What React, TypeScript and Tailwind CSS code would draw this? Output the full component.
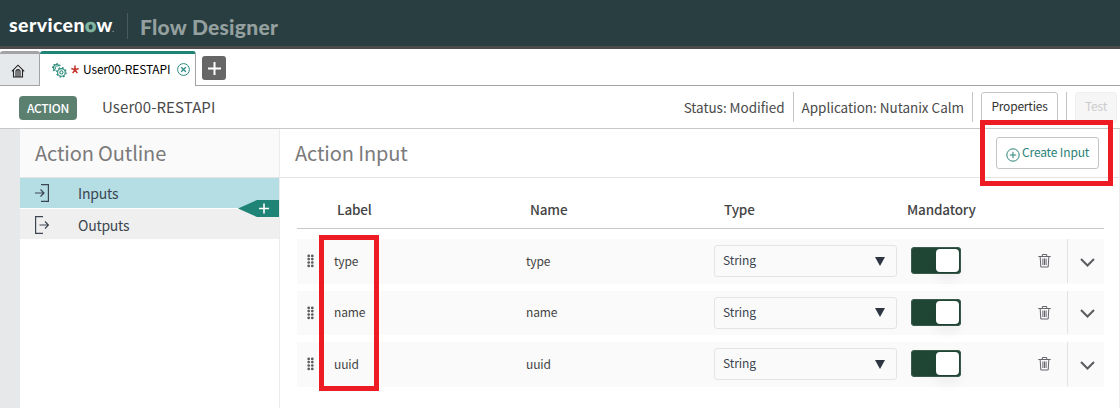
import React from "react";

const RED = "absolute border-[5px] border-[#ed1c24] pointer-events-none";

function House() {
  return (
    <svg width="14" height="14" viewBox="0 0 14 14" fill="none" stroke="#222" strokeWidth="1.1">
      <path d="M.8 7.400 7 1.200l6.200 6.200" />
      <path d="M2.500 6v7h9V6" />
      <path d="M5 13V7.500a2 2 0 0 1 4 0V13M7 6v7" />
    </svg>
  );
}

function Gear({ cx, cy, r, dash }: { cx: number; cy: number; r: number; dash: string }) {
  return (
    <g>
      <circle cx={cx} cy={cy} r={r} strokeWidth="1.1" />
      <circle cx={cx} cy={cy} r={r + 0.9} strokeWidth="1.3" strokeDasharray={dash} />
      <circle cx={cx} cy={cy} r={r * 0.42} strokeWidth="1.1" />
    </g>
  );
}

function Gears() {
  return (
    <svg width="15" height="15" viewBox="0 0 15 15" fill="none" stroke="#2f8d7c">
      <path d="M7.300 3.200A3.100 3.100 0 1 0 3.500 7.600" strokeWidth="1.200" />
      <path d="M8.200 2.900A4 4 0 1 0 3.200 8.500" strokeWidth="1.300" strokeDasharray="1.500 1.500" />
      <path d="M5.600 3.800A1.400 1.400 0 1 0 4 6" strokeWidth="1" />
      <Gear cx={9.400} cy={9.400} r={3.800} dash="1.840 1.850" />
    </svg>
  );
}

function Trash() {
  return (
    <svg width="13" height="15" viewBox="0 0 13 15" fill="none" stroke="#66646c" strokeWidth="1">
      <path d="M.3 3.500h12.400M4.300 3.200V1.500h4.400v1.700M2.200 4l.6 10h7.400l.6-10M4.900 5.500V12M6.500 5.500V12M8.100 5.500V12" />
    </svg>
  );
}

function Dots() {
  return (
    <svg width="7" height="14" viewBox="0 0 7 14" fill="#5a5a5a">
      {[1.9, 5.100, 8.500, 11.900].map((y) => (
        <React.Fragment key={y}>
          <circle cx="1.700" cy={y} r="1.350" />
          <circle cx="5.300" cy={y} r="1.350" />
        </React.Fragment>
      ))}
    </svg>
  );
}

function Row({ name, h }: { name: string; h: string }) {
  return (
    <div className={`flex items-center bg-[#fafafa] text-[12px] text-[#444] ${h}`}>
      <div className="flex w-[37px] pl-[10px]"><Dots /></div>
      <div className="w-[192px] pb-px tracking-[-0.15px]">{name}</div>
      <div className="w-[188px] pb-px tracking-[-0.15px]">{name}</div>
      <div className="flex h-8 w-[183px] items-center justify-between rounded-[3px] border border-[#e3e4e6] pr-[11px] pl-[8px] text-[#3a4250]">
        <span className="pb-[2px] tracking-[-0.1px]">String</span>
        <svg width="10" height="9" viewBox="0 0 10 9" fill="#2e3440"><path d="M0 0h10L5 9z" /></svg>
      </div>
      <div className="mb-px ml-[14px] flex h-[27px] w-[50px] justify-end rounded-[4px] bg-[#1f4535] p-[2px] ring-1 ring-[#3a5a4c] ring-inset">
        <div className="w-[23px] rounded-[4px] bg-white shadow-[0_8px_12px_rgba(0,0,0,0.05)]" />
      </div>
      <div className="mb-px ml-[77px] w-[29px]"><Trash /></div>
      <div className="flex flex-1 items-center self-stretch border-l border-[#e2e2e2] pt-[2px] pl-[12px]">
        <svg width="15" height="9" viewBox="0 0 15 9" fill="none" stroke="#5b5b60" strokeWidth="2"><path d="M1 1l6.500 6.500L14 1" /></svg>
      </div>
    </div>
  );
}

export default function App() {
  return (
    <div className="relative flex h-[408px] w-[1120px] flex-col overflow-hidden bg-white font-['Noto_Sans_CJK_SC','Noto_Sans',sans-serif] leading-none whitespace-nowrap">
      <header className="flex h-[49px] shrink-0 items-center border-b-[3px] border-[#4d4b4b] bg-[#293e40] pt-[6px]">
        <div className="ml-[9px] w-[118px] pb-[2px] font-['Lato',sans-serif] text-[19.500px] font-black tracking-[0.4px] text-white">
          servicen<span className="text-[#81b5a1] [-webkit-text-stroke:0.6px_#81b5a1]">o</span>w<span className="text-[5px] tracking-normal">.</span>
        </div>
        <div className="h-[26px] w-px bg-[#485a5c]" />
        <div className="ml-[12px] font-['Lato',sans-serif] text-[21px] font-black tracking-[0.27px] text-[#94a09f]">Flow Designer</div>
      </header>

      <nav className="flex h-[37px] shrink-0 items-end">
        <div className="flex h-[35px] w-10 items-center justify-center rounded-t-[3px] border-t-[3px] border-r border-b border-[#a3a3a3] bg-[#e6e9eb] pt-[3px] pr-[4px]">
          <House />
        </div>
        <div className="flex h-[35px] w-[156px] items-center rounded-t-[3px] border-t-[3px] border-r border-t-[#1f8476] border-r-[#a3a3a3] pl-[12px]">
          <Gears />
          <svg className="mb-[2px] ml-[4px]" width="8" height="9" viewBox="0 0 8 9" stroke="#c83c36" strokeWidth="1.600"><path d="M4 4.700V.6M4 4.700l3.700-1.300M4 4.700.3 3.400M4 4.700l2.300 3.400M4 4.700 1.700 8.100" /></svg>
          <span className="ml-[4px] w-[88px] pb-[3px] text-[12px] tracking-[-0.17px] text-black">User00-RESTAPI</span>
          <svg className="mb-px ml-[6px]" width="13" height="13" viewBox="0 0 13 13" fill="none" stroke="#2a8a82" strokeWidth="1"><circle cx="6.500" cy="6.500" r="5.900" /><path d="m4.200 4.200 4.600 4.600m0-4.600L4.200 8.800" strokeWidth="1.300" /></svg>
        </div>
        <div className="flex h-full flex-1 items-start border-b border-[#a3a3a3] pt-[7px] pl-[6px]">
          <div className="flex size-6 items-center justify-center rounded-[3px] bg-[#666]">
            <svg width="13" height="13" viewBox="0 0 13 13" stroke="#fff" strokeWidth="2"><path d="M6.500 0v13M0 6.500h13" /></svg>
          </div>
        </div>
      </nav>

      <section className="flex h-[43px] shrink-0 items-center border-b border-[#c8c8c8] text-[#4a4a4a]">
        <div className="mt-[2px] ml-[19px] flex h-6 w-[58px] items-center justify-center rounded-[4px] bg-[#5b8070] text-[12px] font-medium tracking-[-0.3px] text-white">ACTION</div>
        <div className="ml-[25px] pb-[2px] text-[15px] tracking-[0.1px]">User00-RESTAPI</div>
        <div className="ml-auto pt-px text-[13.500px] tracking-[-0.03px]">Status: Modified</div>
        <div className="ml-[8px] flex h-[30px] items-center border-x border-[#c4c4c4] px-[8px] pt-px text-[13.500px] tracking-[-0.03px]">Application: Nutanix Calm</div>
        <div className="ml-[8px] flex h-[30px] w-[77px] items-center justify-center rounded-[3px] border border-[#c4c4c4] pb-[2px] text-[12px] tracking-[-0.2px] text-[#333]">Properties</div>
        <div className="ml-[8px] h-[30px] w-px bg-[#c4c4c4]" />
        <div className="mr-[3px] ml-[8px] flex h-[31px] w-[42px] items-center justify-center rounded-[3px] border border-[#f0f0f0] bg-[#f6f6f6] pb-[2px] text-[12px] tracking-[-0.2px] text-[#ccc]">Test</div>
      </section>

      <main className="flex flex-1">
        <div className="w-5 bg-[#e6e8ea]" />
        <aside className="flex w-[260px] flex-col border-r border-[#ececec]">
          <h2 className="flex h-[49px] items-center border-b border-[#e4e4e4] bg-[#fafafa] pl-[15px] text-[20px] tracking-[-0.13px] text-[#7a7a7a]">Action Outline</h2>
          <div className="flex h-[30px] items-center bg-[#b4dde4] pl-[15px] text-[14px] tracking-[-0.2px] text-[#3c4650]">
            <svg width="14" height="18" viewBox="0 0 14 18" fill="none" stroke="#3c4650" strokeWidth="1.200"><path d="M6 .6h7.400v16.800H6M0 9h9M5.500 5.500 9 9l-3.500 3.500" /></svg>
            <span className="ml-[29px]">Inputs</span>
          </div>
          <div className="mt-px flex h-[30px] items-center bg-[#efefef] pt-px pl-[15px] text-[14px] tracking-[-0.25px] text-[#3c4650]">
            <svg width="14" height="18" viewBox="0 0 14 18" fill="none" stroke="#3c4650" strokeWidth="1.200"><path d="M8 .6H.6v16.800H8M4.500 9h9M10 5.500 13.500 9 10 12.500" /></svg>
            <span className="ml-[29px]">Outputs</span>
          </div>
        </aside>
        <div className="flex flex-1 flex-col border-r border-[#eee]">
          <div className="flex h-[49px] items-center justify-between border-b border-[#e4e4e4] pr-[20px] pl-[15px]">
            <h2 className="text-[20px] tracking-[-0.12px] text-[#7a7a7a]">Action Input</h2>
            <button className="flex h-8 w-[103px] items-center rounded-[3px] border border-[#c4c4c4] pl-[9px] text-[12px] tracking-[-0.15px] text-[#2a8177]">
              <svg width="14" height="14" viewBox="0 0 14 14" fill="none" stroke="#2a8177" className="mt-[3px] mr-[2px]"><circle cx="7" cy="7" r="6.200" /><path d="M7 3.800v6.400M3.800 7h6.400" /></svg>
              <span className="pb-[2px]">Create Input</span>
            </button>
          </div>
          <div className="mr-[15px] ml-[17px] flex flex-col">
            <div className="flex h-[51px] items-center border-b border-[#c8c8c8] pt-[13px] text-[13.500px] font-medium tracking-[-0.15px] text-[#444]">
              <div className="ml-[40px] w-[193px]">Label</div>
              <div className="w-[194px]">Name</div>
              <div className="w-[183px]">Type</div>
              <div>Mandatory</div>
            </div>
            <div className="mt-[10px] flex flex-col gap-[7px]">
              <Row name="type" h="h-[45px] pb-px" />
              <Row name="name" h="h-[44px] pb-px" />
              <Row name="uuid" h="h-[45px] pb-px" />
            </div>
          </div>
        </div>
      </main>

      <svg className="absolute top-[200px] left-[238px]" width="41" height="17" viewBox="0 0 41 17">
        <path d="M0 8.500 19 0h22v17H19z" fill="#1f8476" />
        <path d="M26 3.500v10M21 8.500h10" stroke="#fff" strokeWidth="1.600" />
      </svg>
      <div className={`${RED} top-[120px] left-[980px] h-[66px] w-[133px]`} />
      <div className={`${RED} top-[235px] left-[319px] h-[156px] w-[60px]`} />
    </div>
  );
}
